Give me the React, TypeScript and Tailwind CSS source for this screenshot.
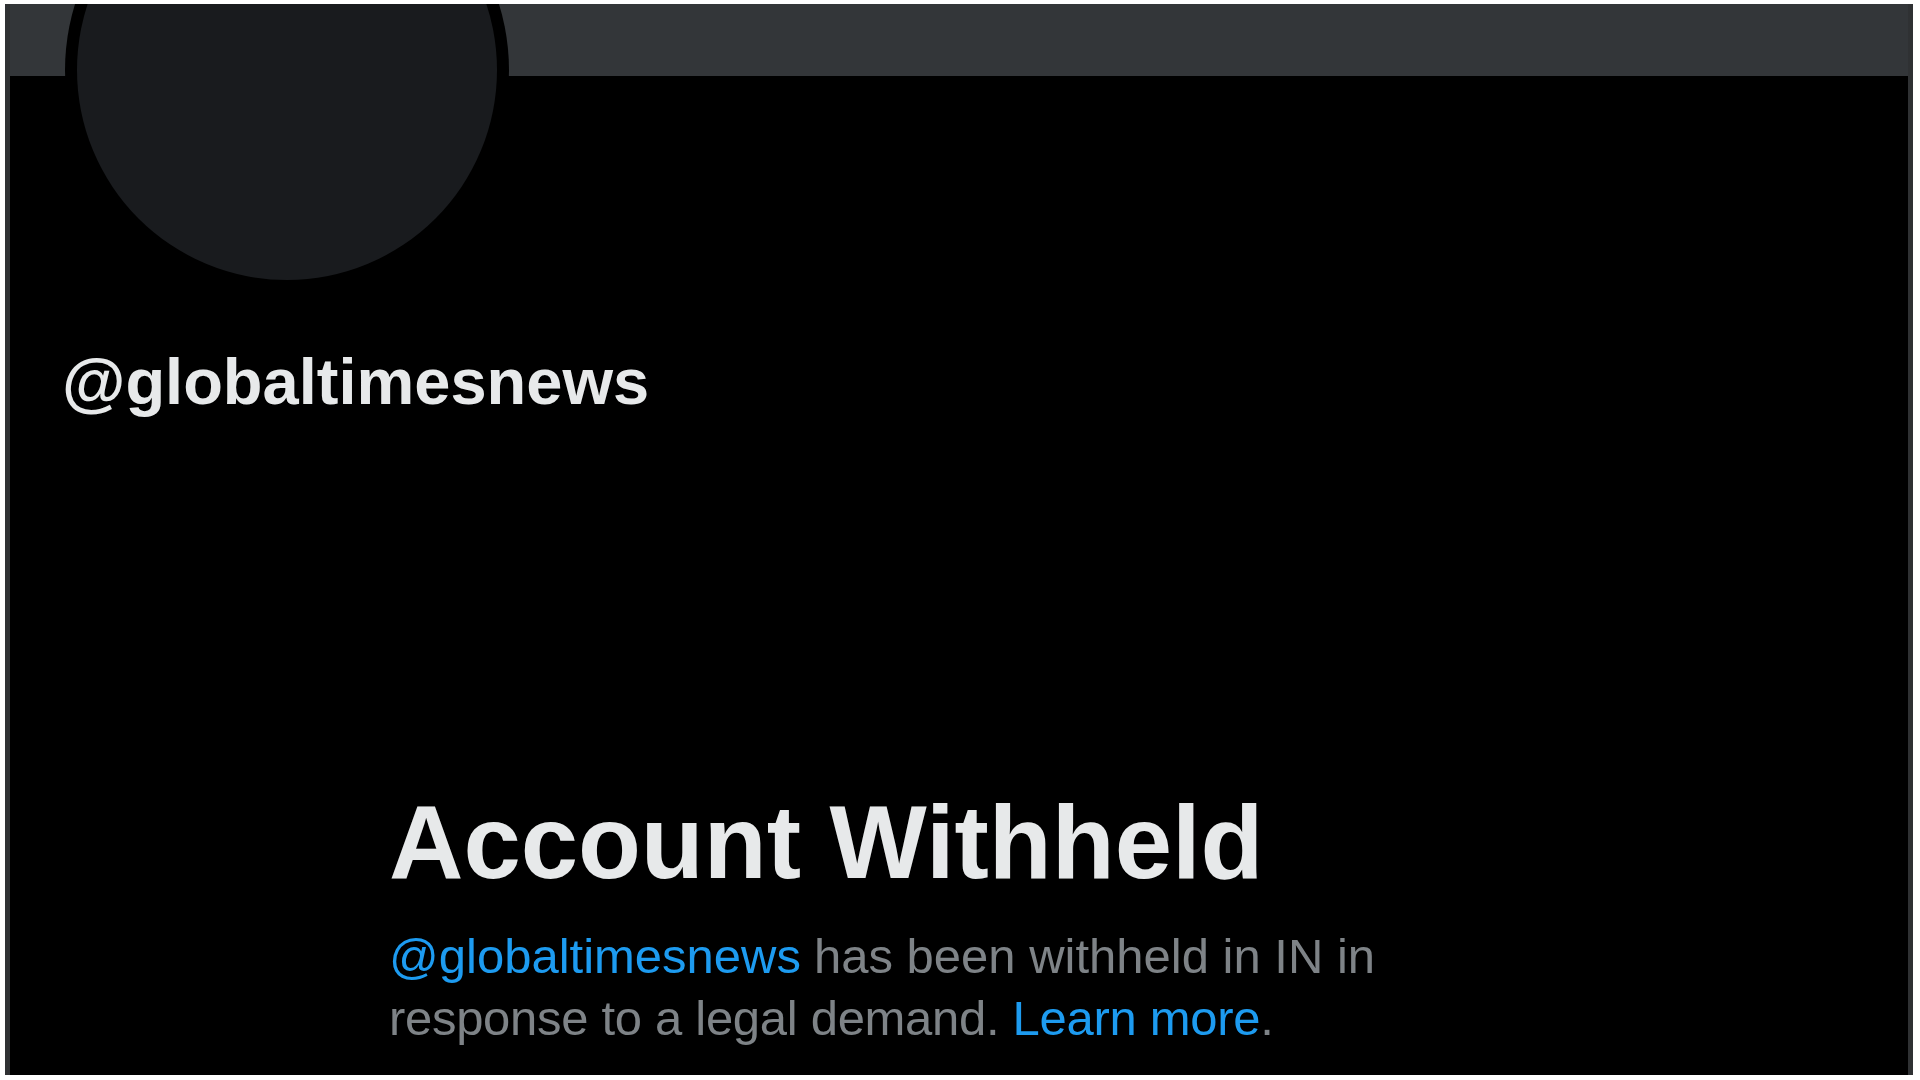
import React from "react";

export default function App() {
  return (
    <div className="w-[1920px] h-[1080px] bg-white pt-[4px] pl-[5px] pr-[7px] pb-[5px]" style={{ fontFamily: '"Liberation Sans", Arial, sans-serif' }}>
      <div className="w-full h-full bg-black border-x-[5px] border-[#2f3133] overflow-hidden flex flex-col">
        <div className="h-[72px] w-full bg-[#333639] shrink-0" />
        <div className="ml-[55px] mt-[-228px] w-[444px] h-[444px] rounded-full bg-black p-[12px] shrink-0">
          <div className="w-full h-full rounded-full bg-[#191b1e]" />
        </div>
        <div className="mt-[57px] pl-[52px] text-[65px] leading-none font-bold text-[#e7e9ea]">
          @globaltimesnews
        </div>
        <div className="mt-[377px] pl-[379px] flex flex-col">
          <h1 className="text-[103px] leading-none font-bold text-[#e7e9ea]">Account Withheld</h1>
          <div className="mt-[31px] text-[49px] leading-[62px] text-[#7e8387] flex flex-col">
            <div className="flex gap-[13px] whitespace-nowrap">
              <span className="text-[#1d9bf0]">@globaltimesnews</span>
              <span>has been withheld in IN in</span>
            </div>
            <div className="flex whitespace-nowrap tracking-[-0.3px]">
              <span>response to a legal demand.&nbsp;</span>
              <span className="text-[#1d9bf0]">Learn more</span>
              <span>.</span>
            </div>
          </div>
        </div>
      </div>
    </div>
  );
}
